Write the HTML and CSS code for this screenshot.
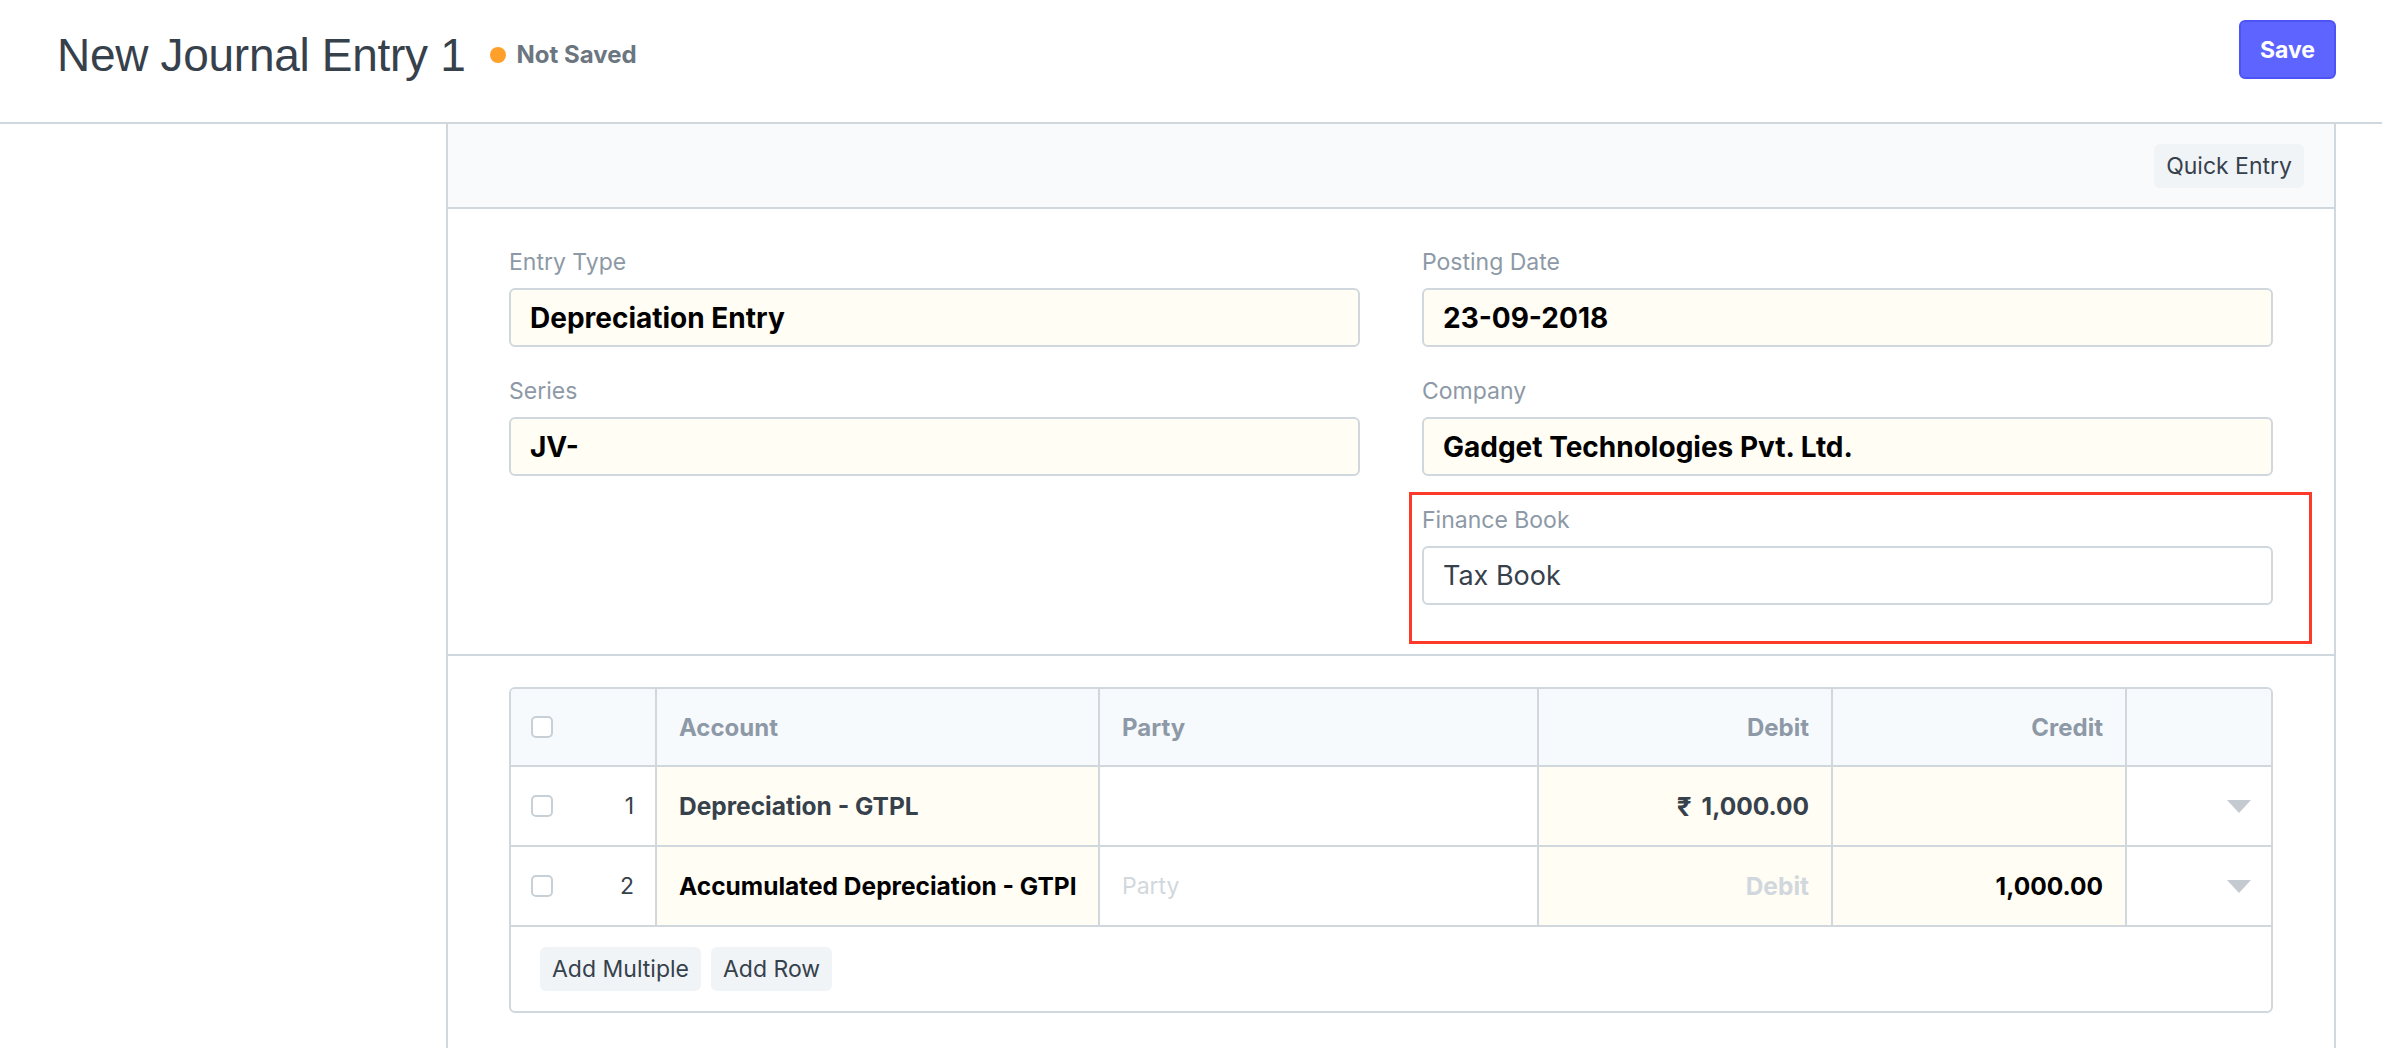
FILE: index.html
```html
<!DOCTYPE html>
<html lang="en">
<head>
<meta charset="utf-8">
<title>New Journal Entry 1</title>
<link rel="stylesheet" href="styles.css">
</head>
<body>
<header class="page-head">
  <div class="title-area">
    <h1 class="title">New Journal Entry 1</h1>
    <span class="indicator"><span class="dot"></span>Not Saved</span>
  </div>
  <button class="btn-primary">Save</button>
</header>
<div class="layout">
  <aside class="sidebar"></aside>
  <main class="form">
    <div class="form-toolbar">
      <button class="btn-default">Quick Entry</button>
    </div>
    <section class="fields">
      <div class="col">
        <div class="field">
          <div class="label">Entry Type</div>
          <div class="input">Depreciation Entry</div>
        </div>
        <div class="field">
          <div class="label">Series</div>
          <div class="input">JV-</div>
        </div>
      </div>
      <div class="col">
        <div class="field">
          <div class="label">Posting Date</div>
          <div class="input">23-09-2018</div>
        </div>
        <div class="field">
          <div class="label">Company</div>
          <div class="input">Gadget Technologies Pvt. Ltd.</div>
        </div>
        <div class="field">
          <div class="label">Finance Book</div>
          <div class="input plain">Tax Book</div>
          <div class="highlight"></div>
        </div>
      </div>
    </section>
    <section class="table-section">
      <div class="grid">
        <div class="grid-row grid-head">
          <div class="cell idx"><span class="check"></span></div>
          <div class="cell">Account</div>
          <div class="cell">Party</div>
          <div class="cell num">Debit</div>
          <div class="cell num">Credit</div>
          <div class="cell"></div>
        </div>
        <div class="grid-row">
          <div class="cell idx"><span class="check"></span><span class="row-no">1</span></div>
          <div class="cell req strong dim">Depreciation - GTPL</div>
          <div class="cell"></div>
          <div class="cell req num strong dim"><span class="currency">₹</span>1,000.00</div>
          <div class="cell req"></div>
          <div class="cell act"><svg class="caret" width="24" height="13" viewBox="0 0 24 13"><polygon points="0,0 24,0 12,13" fill="#c4cad0"/></svg></div>
        </div>
        <div class="grid-row">
          <div class="cell idx"><span class="check"></span><span class="row-no">2</span></div>
          <div class="cell req strong">Accumulated Depreciation - GTPI</div>
          <div class="cell placeholder">Party</div>
          <div class="cell req num strong placeholder">Debit</div>
          <div class="cell req num strong">1,000.00</div>
          <div class="cell act"><svg class="caret" width="24" height="13" viewBox="0 0 24 13"><polygon points="0,0 24,0 12,13" fill="#c4cad0"/></svg></div>
        </div>
        <div class="grid-footer">
          <button class="btn-default">Add Multiple</button>
          <button class="btn-default">Add Row</button>
        </div>
      </div>
    </section>
  </main>
</div>
</body>
</html>
```
FILE: styles.css
```css
* { box-sizing: border-box; }
html, body { margin: 0; padding: 0; background: #fff; }
body {
  font-family: Inter, "Noto Sans", "DejaVu Sans", sans-serif;
  color: #36414c;
  width: 2382px;
  height: 1048px;
  overflow: hidden;
}
button { font-family: inherit; cursor: pointer; }

.page-head {
  display: flex;
  align-items: flex-start;
  height: 124px;
  padding: 0 46px 0 57px;
  border-bottom: 2px solid #d1d8dd;
}
.title-area {
  display: flex;
  align-items: center;
  margin-top: 32px;
}
.title {
  margin: 0;
  font-family: "Liberation Sans", Arial, sans-serif;
  font-weight: 400;
  font-size: 46px;
  line-height: 46px;
  color: #36414c;
  letter-spacing: -0.3px;
}
.indicator {
  display: flex;
  align-items: center;
  margin-left: 25px;
  font-size: 24px;
  font-weight: 700;
  line-height: 24px;
  color: #6c7680;
}
.dot {
  width: 16px;
  height: 16px;
  border-radius: 50%;
  background: #ffa02a;
  margin-right: 10px;
}
.btn-primary {
  margin-left: auto;
  margin-top: 20px;
  height: 59px;
  padding: 0 19px;
  background: #5e64ff;
  border: 2px solid #4d54f6;
  border-radius: 6px;
  color: #fff;
  font-size: 23px;
  font-weight: 700;
}

.layout { display: flex; }
.sidebar { width: 446px; flex: none; }
.form {
  flex: 1;
  margin-right: 46px;
  border-left: 2px solid #d1d8dd;
  border-right: 2px solid #d1d8dd;
  height: 924px;
}
.form-toolbar {
  height: 85px;
  background: #f9fafb;
  border-bottom: 2px solid #d1d8dd;
  display: flex;
  align-items: center;
  justify-content: flex-end;
  padding-right: 30px;
}
.btn-default {
  height: 44px;
  padding: 0 12px;
  background: #f0f4f7;
  border: 0;
  border-radius: 6px;
  font-size: 23px;
  color: #36414c;
}

.fields {
  display: grid;
  grid-template-columns: 1fr 1fr;
  column-gap: 62px;
  padding: 37px 61px 21px;
  border-bottom: 2px solid #d1d8dd;
}
.field {
  position: relative;
  margin-bottom: 28px;
}
.label {
  font-size: 23px;
  line-height: 32px;
  color: #8d99a6;
  margin-bottom: 10px;
}
.input {
  height: 59px;
  border: 2px solid #d1d8dd;
  border-radius: 6px;
  background: #fffdf4;
  padding: 0 19px;
  display: flex;
  align-items: center;
  font-size: 28px;
  font-weight: 700;
  color: #000;
}
.input.plain {
  background: #fff;
  font-size: 27px;
  font-weight: 400;
  color: #36414c;
}
.highlight {
  position: absolute;
  left: -13px;
  right: -39px;
  top: -12px;
  bottom: -39px;
  border: 3px solid #fb3a2a;
  pointer-events: none;
}

.table-section {
  padding: 31px 61px 40px;
}
.grid {
  border: 2px solid #d1d8dd;
  border-radius: 6px;
  overflow: hidden;
}
.grid-row {
  display: grid;
  grid-template-columns: 144px 443px 439px 294px 294px 1fr;
  height: 80px;
  border-bottom: 2px solid #d1d8dd;
}
.grid-head {
  height: 78px;
  background: #f7fafc;
  font-weight: 700;
  color: #8d99a6;
}
.grid-head .cell { font-size: 24px; }
.cell {
  display: flex;
  align-items: center;
  padding: 0 22px;
  border-left: 2px solid #d1d8dd;
  overflow: hidden;
  white-space: nowrap;
  font-size: 23px;
}
.cell.idx {
  border-left: 0;
  padding: 0 21px 0 20px;
  justify-content: space-between;
}
.cell.num { justify-content: flex-end; }
.cell.act { justify-content: flex-end; padding-right: 20px; }
.cell.req { background: #fffdf4; }
.cell.strong { font-weight: 700; color: #000; font-size: 24.5px; }
.cell.strong.dim { color: #36414c; }
.cell.placeholder, .cell.strong.placeholder { color: #d1d8dd; }
.currency { margin-right: 10px; font-size: 26px; }
.row-no { color: #36414c; }
.check {
  width: 22px;
  height: 22px;
  border: 2px solid #c8d0d7;
  border-radius: 5px;
  background: #fff;
}
.caret { display: block; }
.grid-footer {
  display: flex;
  gap: 10px;
  padding: 20px 29px;
  height: 84px;
}
```
